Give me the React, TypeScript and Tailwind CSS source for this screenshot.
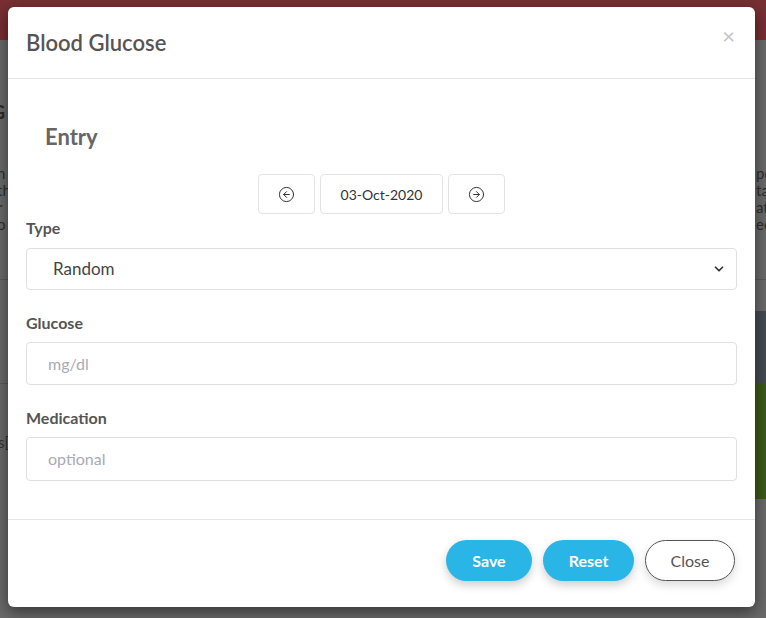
import React from "react";
import { CircleArrowLeft, CircleArrowRight, ChevronDown } from "lucide-react";

const font = { fontFamily: "Lato, 'Open Sans', sans-serif" };

export default function App() {
  return (
    <div className="relative w-[766px] h-[618px] overflow-hidden bg-[#6a6a6a]" style={font}>
      {/* dimmed page behind */}
      <div className="h-[40px] bg-[#772f33]" />
      <div className="flex justify-between">
        <div className="w-[40px] flex flex-col">
          <div className="h-[60px]" />
          <div className="text-[18px] font-bold text-[#2b2b2b] leading-[24px] -ml-[8px]">G</div>
          <div className="h-[41px]" />
          <div className="text-[15px] text-[#2e2e2e] leading-[17px] -ml-[3px]">
            <div>h</div>
            <div>th</div>
            <div>r</div>
            <div>o</div>
          </div>
          <div className="h-[46px]" />
          <div className="border-t border-[#5a5a5a] h-[104px]" />
          <div className="border-t border-[#5a5a5a] h-[48px]" />
          <div className="text-[15px] text-[#333] -ml-[2px]">s[</div>
        </div>
        <div className="w-[40px] flex flex-col">
          <div className="h-[125px]" />
          <div className="text-[15px] text-[#2e2e2e] leading-[17px] pl-[30px] whitespace-nowrap">
            <div>pe</div>
            <div>ta</div>
            <div>at</div>
            <div>ec</div>
          </div>
          <div className="h-[46px]" />
          <div className="border-t border-[#5a5a5a] h-[32px]" />
          <div className="h-[72px] bg-[#454b52]" />
          <div className="h-[116px] bg-[#3d5a16]" />
        </div>
      </div>

      {/* modal */}
      <div className="absolute left-[8px] top-[7px] w-[747px] h-[600px] bg-white rounded-[6px] shadow-[0_5px_15px_rgba(0,0,0,0.5)] flex flex-col">
        <div className="h-[72px] border-b border-[#e5e5e5] flex items-center justify-between pl-[18px] pr-[20px] shrink-0">
          <div className="text-[22px] font-semibold text-[#555]">Blood Glucose</div>
          <div className="text-[22px] text-[#c4c4c4] leading-none mb-[14px]">×</div>
        </div>
        <div className="flex-1 px-[18px] pt-[42px]">
          <div className="h-[30px] flex items-center pl-[19px] text-[22px] font-bold text-[#666]">Entry</div>
          <div className="mt-[23px] flex justify-center gap-[5px]">
            <div className="w-[57px] h-[40px] border border-[#e3e3e3] rounded-[4px] flex items-center justify-center">
              <CircleArrowLeft size={17} strokeWidth={1.4} color="#333" />
            </div>
            <div className="w-[123px] h-[40px] border border-[#e3e3e3] rounded-[4px] flex items-center justify-center text-[14px] text-[#333]">
              03-Oct-2020
            </div>
            <div className="w-[57px] h-[40px] border border-[#e3e3e3] rounded-[4px] flex items-center justify-center">
              <CircleArrowRight size={17} strokeWidth={1.4} color="#333" />
            </div>
          </div>
          <div className="mt-[4px] h-[20px] flex items-center text-[16px] font-bold text-[#555]">Type</div>
          <div className="mt-[10px] h-[42px] border border-[#e0e0e0] rounded-[4px] flex items-center justify-between pl-[26px] pr-[10px]">
            <span className="text-[17px] text-[#444]">Random</span>
            <ChevronDown size={14} strokeWidth={3} color="#333" />
          </div>
          <div className="mt-[23px] h-[20px] flex items-center text-[16px] font-bold text-[#555]">Glucose</div>
          <div className="mt-[9px] h-[43px] border border-[#e0e0e0] rounded-[4px] flex items-center pl-[21px]">
            <span className="text-[16px] text-[#a8aab8]">mg/dl</span>
          </div>
          <div className="mt-[23px] h-[20px] flex items-center text-[16px] font-bold text-[#555]">Medication</div>
          <div className="mt-[9px] h-[44px] border border-[#e0e0e0] rounded-[4px] flex items-center pl-[21px]">
            <span className="text-[16px] text-[#a8aab8]">optional</span>
          </div>
        </div>
        <div className="h-[88px] border-t border-[#e5e5e5] flex justify-end items-start pt-[20px] pr-[20px] gap-[11px] shrink-0">
          <div className="w-[86px] h-[41px] rounded-full bg-[#29b5e6] text-white font-bold text-[16px] flex items-center justify-center shadow-[0_4px_10px_rgba(0,0,0,0.2)]">Save</div>
          <div className="w-[91px] h-[41px] rounded-full bg-[#29b5e6] text-white font-bold text-[16px] flex items-center justify-center shadow-[0_4px_10px_rgba(0,0,0,0.2)]">Reset</div>
          <div className="w-[90px] h-[41px] rounded-full bg-white border border-[#555] text-[#555] text-[16px] flex items-center justify-center shadow-[0_4px_10px_rgba(0,0,0,0.15)]">Close</div>
        </div>
      </div>
    </div>
  );
}
